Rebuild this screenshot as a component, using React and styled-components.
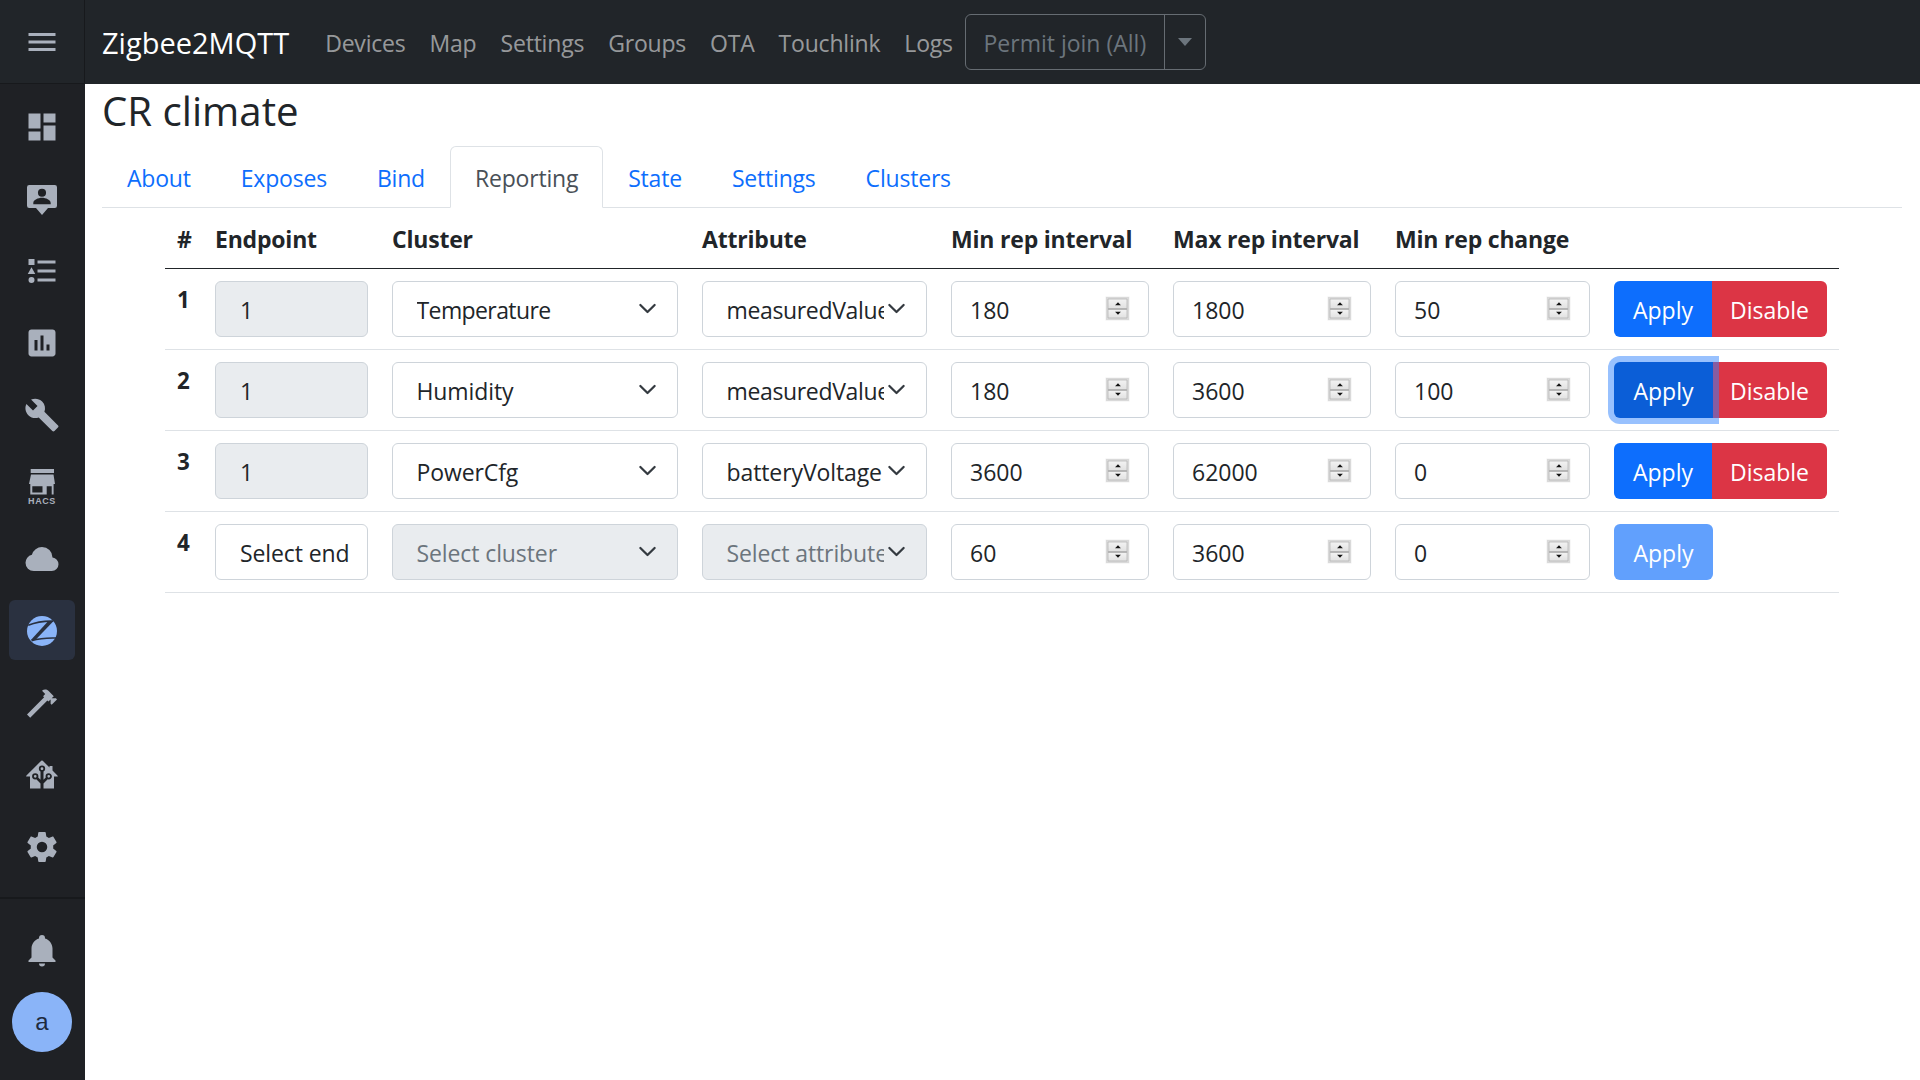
import React from 'react';
import styled, { createGlobalStyle } from 'styled-components';

const FONT = '"Open Sans", "Noto Sans", "Liberation Sans", sans-serif';
const chevron = "url(\"data:image/svg+xml,%3csvg xmlns='http://www.w3.org/2000/svg' viewBox='0 0 16 16'%3e%3cpath fill='none' stroke='%23343a40' stroke-linecap='round' stroke-linejoin='round' stroke-width='1.9' d='M2 5l6 6 6-6'/%3e%3c/svg%3e\")";

const Global = createGlobalStyle`
  html, body { margin: 0; padding: 0; height: 100%; background: #fff; }
  body { font-family: ${FONT}; font-size: 23px; color: #212529; overflow: hidden; }
  #root { height: 100%; }
  * { box-sizing: border-box; }
`;

const Shell = styled.div`display: flex; height: 1080px; width: 1920px;`;

const Sidebar = styled.aside`
  width: 85px; flex: none; background: #1f2125; display: flex; flex-direction: column;
`;
const SideTop = styled.div`
  height: 84px; flex: none; background: #212529; border-bottom: 1px solid #17191c; border-right: 1px solid #17191c;
  display: flex; align-items: center; justify-content: center;
`;
const SideList = styled.nav`
  padding: 12px 0 0 9px; display: flex; flex-direction: column; gap: 12px;
  & > * { padding-top: 2px; }
`;
const SideItem = styled.div`
  width: 66px; height: 60px; border-radius: 6px; display: flex; align-items: center; justify-content: center;
  background: ${p => (p.$active ? '#2a3140' : 'transparent')};
  color: ${p => (p.$active ? '#8ab4f8' : '#a9b0bc')};
`;
const SideFoot = styled.div`
  margin-top: auto; height: 183px; border-top: 2px solid #17191c; padding: 21px 0 0 9px;
  display: flex; flex-direction: column; gap: 12px;
`;
const Avatar = styled.div`
  width: 60px; height: 60px; margin-left: 3px; border-radius: 50%; background: #8ab4f8; color: #1f2a3d;
  display: flex; align-items: center; justify-content: center; font-family: "Liberation Sans", sans-serif; font-size: 24px;
`;

const Icon = ({ d, size = 36 }) => (
  <svg width={size} height={size} viewBox="0 0 24 24" fill="currentColor" fillRule="evenodd"><path d={d} /></svg>
);
const MenuIcon = styled.span`color: #a9b0bc; display: flex;`;
const HacsWrap = styled.div`
  display: flex; flex-direction: column; align-items: center; color: #a9b0bc; line-height: 1;
`;
const HacsLabel = styled.span`
  font-family: "Liberation Sans", sans-serif; font-size: 9px; font-weight: 700; letter-spacing: .6px; margin-top: 2px;
`;
const HacsIcon = () => (
  <svg width="26" height="26" viewBox="0 0 26 26" fill="currentColor" fillRule="evenodd">
    <path d="M1.7 0H25V4H1.7ZM2 5.5H24.5L26 15H0ZM1.3 15H24.6V25.6H22.7V17.3H17.7V25.6H1.3ZM3.3 17.3H13.5V23.5H3.3Z" />
  </svg>
);
const ZigbeeIcon = () => (
  <svg width="36" height="36" viewBox="0 0 24 24" fill="none">
    <circle cx="12" cy="12" r="10" fill="currentColor" />
    <path d="M2.8 8.2Q10 5.2 19.4 5.4" stroke="#2a3140" strokeWidth="1.1" />
    <path d="M15.6 6L19.4 5.6L7.6 18H4.6Z" fill="#2a3140" />
    <path d="M5 18.4Q12 16.4 21.6 16.7" stroke="#2a3140" strokeWidth="1.1" />
  </svg>
);

const Right = styled.div`flex: 1; min-width: 0; display: flex; flex-direction: column;`;
const Navbar = styled.header`
  height: 84px; flex: none; background: #212529; display: flex; align-items: center; padding-left: 17px;
`;
const Brand = styled.span`color: #fff; font-size: 29px; margin-right: 24px; white-space: nowrap; padding-top: 1px;`;
const NavLink = styled.a`color: rgba(255,255,255,.55); padding: 2px 12px 0; font-size: 23px; white-space: nowrap; letter-spacing: -.2px;`;
const PermitGroup = styled.div`
  display: flex; height: 56px; border: 1px solid #666c72; border-radius: 6px;
`;
const PermitMain = styled.span`
  width: 198px; display: flex; align-items: center; justify-content: center; color: #6c757d; font-size: 23px; padding-top: 2px;
`;
const PermitCaret = styled.span`
  width: 41px; border-left: 1px solid #666c72; display: flex; align-items: center; justify-content: center;
  &::after { content: ''; border-top: 8px solid #6c757d; border-left: 7px solid transparent; border-right: 7px solid transparent; }
`;

const Main = styled.main`flex: 1; padding: 0 18px 0 17px;`;
const Title = styled.h3`
  margin: 0; height: 62px; font-size: 40.2px; font-weight: 400; line-height: 54px; color: #212529;
`;
const Tabs = styled.div`display: flex; height: 62px; border-bottom: 1px solid #dee2e6;`;
const Tab = styled.a`
  height: 62px; padding: 2px 24px 0; display: flex; align-items: center; white-space: nowrap; letter-spacing: -.2px;
  border: 1px solid ${p => (p.$active ? '#dee2e6' : 'transparent')};
  border-bottom-color: ${p => (p.$active ? '#fff' : 'transparent')};
  border-radius: 6px 6px 0 0;
  color: ${p => (p.$active ? '#495057' : '#0d6efd')};
  background: ${p => (p.$active ? '#fff' : 'transparent')};
`;
const Table = styled.table`
  width: 1674px; margin: 0 auto; table-layout: fixed; border-collapse: collapse;
`;
const Col = styled.col`width: ${p => p.$w}px;`;
const Th = styled.th`
  height: 60px; padding: 3px 12px 0; text-align: left; font-weight: 700; font-size: 23px; white-space: nowrap;
  border-bottom: 1px solid #212529; letter-spacing: -.2px;
`;
const Row = styled.tr`border-bottom: 1px solid #dee2e6;`;
const Td = styled.td`padding: 12px; vertical-align: top; height: 81px;`;
const IdCell = styled(Td)`font-weight: 700; font-size: 22.4px; line-height: 38px;`;

const Select = styled.select`
  display: block; width: 100%; height: 56px; margin: 0; font: inherit; font-size: 23px;
  letter-spacing: ${p => p.$spacing ?? -0.1}px;
  appearance: none; border: 1px solid #ced4da; border-radius: 6px; opacity: 1;
  padding: 2px ${p => (p.$plain ? 18 : 42)}px 0 ${p => (p.$plain ? 24 : 23.5)}px;
  color: ${p => (p.$muted ? '#6c757d' : '#212529')};
  background-color: ${p => (p.$grey ? '#e9ecef' : '#fff')};
  background-image: ${p => (p.$plain ? 'none' : chevron)};
  background-repeat: no-repeat; background-position: right 20px center; background-size: 19px 19px;
`;
const NumberBox = styled.div`
  height: 56px; border: 1px solid #ced4da; border-radius: 6px; display: flex; align-items: center; padding: 0 19px 0 18px; background: #fff;
`;
const NumberInput = styled.input`
  flex: 1; min-width: 0; border: 0; outline: 0; padding: 2px 0 0; font: inherit; font-size: 23px; color: #212529; background: transparent;
  appearance: textfield;
  &::-webkit-inner-spin-button, &::-webkit-outer-spin-button { -webkit-appearance: none; margin: 0; }
`;
const Spinner = styled.div`
  flex: none; width: 23px; height: 23px; border: 2px solid #b3b3b3; outline: 1px solid #efefef; outline-offset: -1px;
  display: flex; flex-direction: column; gap: 2px; background: #b3b3b3; box-shadow: 0 0 0 1px #efefef;
  transform: scale(.96);
`;
const SpinStep = styled.span`
  flex: 1; background: linear-gradient(#f2f2f2, #e2e2e2); display: flex; align-items: center; justify-content: center;
  &::after {
    content: ''; border-left: 3.5px solid transparent; border-right: 3.5px solid transparent;
    ${p => (p.$down ? 'border-top: 3.5px solid #111;' : 'border-bottom: 3.5px solid #111;')}
  }
`;
const Actions = styled.div`display: flex;`;
const Button = styled.button`
  height: 56px; margin: 0; border: 0; font: inherit; font-size: 23px; color: #fff; position: relative;
  padding: 2px 0 0; white-space: nowrap;
`;
const ApplyBtn = styled(Button)`
  width: ${p => (p.$alone ? 99 : p.$focused ? 99 : 98)}px;
  border-radius: ${p => (p.$alone ? '6px' : '6px 0 0 6px')};
  background: ${p => (p.$focused ? '#0b5ed7' : '#0d6efd')};
  opacity: ${p => (p.$alone ? .65 : 1)};
  z-index: ${p => (p.$focused ? 1 : 0)};
  box-shadow: ${p => (p.$focused ? '0 0 0 6px rgba(49,132,253,.5)' : 'none')};
`;
const DisableBtn = styled(Button)`
  flex: none; width: 115px; border-radius: 0 6px 6px 0; background: #dc3545;
  margin-left: ${p => (p.$after ? -1 : 0)}px;
`;

const P = {
  dash: 'M13,3V9H21V3M13,21H21V11H13M3,21H11V15H3M3,13H11V3H3V13Z',
  person: 'M3.5 2.7H20.5A1.5 1.5 0 0 1 22 4.2V16.5A1.5 1.5 0 0 1 20.5 18H16L12 22.7L8 18H3.5A1.5 1.5 0 0 1 2 16.5V4.2A1.5 1.5 0 0 1 3.5 2.7ZM12 5.1A2.7 2.7 0 1 0 12 10.5A2.7 2.7 0 1 0 12 5.1ZM6.2 15.5H17.8V14.6C17.8 12.5 14.5 11.1 12 11.1C9.5 11.1 6.2 12.5 6.2 14.6Z',
  list: 'M5,9.5L7.5,14H2.5L5,9.5M3,4H7V8H3V4M5,20A2,2 0 0,0 7,18A2,2 0 0,0 5,16A2,2 0 0,0 3,18A2,2 0 0,0 5,20M9,5V7H21V5H9M9,19H21V17H9V19M9,13H21V11H9V13Z',
  chart: 'M19 3H5C3.89 3 3 3.89 3 5V19C3 20.1 3.89 21 5 21H19C20.1 21 21 20.1 21 19V5C21 3.89 20.1 3 19 3M9 17H7V10H9V17M13 17H11V7H13V17M17 17H15V13H17V17Z',
  wrench: 'M22.7,19L13.6,9.9C14.5,7.6 14,4.9 12.1,3C10.1,1 7.1,0.6 4.7,1.7L9,6L6,9L1.6,4.7C0.4,7.1 0.9,10.1 2.9,12.1C4.8,14 7.5,14.5 9.8,13.6L18.9,22.7C19.3,23.1 19.9,23.1 20.3,22.7L22.6,20.4C23.1,20 23.1,19.3 22.7,19Z',
  cloud: 'M6.5 20Q4.22 20 2.61 18.43 1 16.85 1 14.58 1 12.63 2.17 11.1 3.35 9.57 5.25 9.15 5.88 6.85 7.75 5.43 9.63 4 12 4 14.93 4 16.96 6.04 19 8.07 19 11 20.73 11.2 21.86 12.5 23 13.78 23 15.5 23 17.38 21.69 18.69 20.38 20 18.5 20Z',
  hammer: 'M2 19.63L13.43 8.2L12.72 7.5L14.14 6.07L12 3.89C13.2 2.7 15.09 2.7 16.27 3.89L19.87 7.5L18.45 8.91H21.29L22 9.62L18.45 13.21L17.74 12.5V9.62L16.27 11.04L15.56 10.33L4.13 21.76L2 19.63Z',
  home: 'M21.8,13H20V21H13V17.67L15.79,14.88L16.5,15C17.66,15 18.6,14.06 18.6,12.9C18.6,11.74 17.66,10.8 16.5,10.8A2.1,2.1 0 0,0 14.4,12.9L14.5,13.61L13,15.13V9.65C13.66,9.29 14.1,8.6 14.1,7.8A2.1,2.1 0 0,0 12,5.7A2.1,2.1 0 0,0 9.9,7.8C9.9,8.6 10.34,9.29 11,9.65V15.13L9.5,13.61L9.6,12.9A2.1,2.1 0 0,0 7.5,10.8A2.1,2.1 0 0,0 5.4,12.9A2.1,2.1 0 0,0 7.5,15L8.21,14.88L11,17.67V21H4V13H2.25C1.83,13 1.42,13 1.42,12.79C1.43,12.57 1.85,12.15 2.28,11.72L11,3C11.33,2.67 11.67,2.33 12,2.33C12.33,2.33 12.67,2.67 13,3L17,7V6H19V9L21.78,11.78C22.15,12.15 22.55,12.55 22.57,12.76C22.6,12.98 22.2,13 21.8,13M7.5,12A0.9,0.9 0 0,1 8.4,12.9A0.9,0.9 0 0,1 7.5,13.8A0.9,0.9 0 0,1 6.6,12.9A0.9,0.9 0 0,1 7.5,12M16.5,12C17,12 17.4,12.4 17.4,12.9C17.4,13.4 17,13.8 16.5,13.8A0.9,0.9 0 0,1 15.6,12.9A0.9,0.9 0 0,1 16.5,12M12,6.9C12.5,6.9 12.9,7.3 12.9,7.8C12.9,8.3 12.5,8.7 12,8.7C11.5,8.7 11.1,8.3 11.1,7.8C11.1,7.3 11.5,6.9 12,6.9Z',
  cog: 'M12,15.5A3.5,3.5 0 0,1 8.5,12A3.5,3.5 0 0,1 12,8.5A3.5,3.5 0 0,1 15.5,12A3.5,3.5 0 0,1 12,15.5M19.43,12.97C19.47,12.65 19.5,12.33 19.5,12C19.5,11.67 19.47,11.34 19.43,11L21.54,9.37C21.73,9.22 21.78,8.95 21.66,8.73L19.66,5.27C19.54,5.05 19.27,4.96 19.05,5.05L16.56,6.05C16.04,5.66 15.5,5.32 14.87,5.07L14.5,2.42C14.46,2.18 14.25,2 14,2H10C9.75,2 9.54,2.18 9.5,2.42L9.13,5.07C8.5,5.32 7.96,5.66 7.44,6.05L4.95,5.05C4.73,4.96 4.46,5.05 4.34,5.27L2.34,8.73C2.21,8.95 2.27,9.22 2.46,9.37L4.57,11C4.53,11.34 4.5,11.67 4.5,12C4.5,12.33 4.53,12.65 4.57,12.97L2.46,14.63C2.27,14.78 2.21,15.05 2.34,15.27L4.34,18.73C4.46,18.95 4.73,19.03 4.95,18.95L7.44,17.94C7.96,18.34 8.5,18.68 9.13,18.93L9.5,21.58C9.54,21.82 9.75,22 10,22H14C14.25,22 14.46,21.82 14.5,21.58L14.87,18.93C15.5,18.67 16.04,18.34 16.56,17.94L19.05,18.95C19.27,19.03 19.54,18.95 19.66,18.73L21.66,15.27C21.78,15.05 21.73,14.78 21.54,14.63L19.43,12.97Z',
  bell: 'M21,19V20H3V19L5,17V11C5,7.9 7.03,5.17 10,4.29C10,4.19 10,4.1 10,4A2,2 0 0,1 12,2A2,2 0 0,1 14,4C14,4.1 14,4.19 14,4.29C16.97,5.17 19,7.9 19,11V17L21,19M14,21A2,2 0 0,1 12,23A2,2 0 0,1 10,21',
  menu: 'M3,6H21V8H3V6M3,11H21V13H3V11M3,16H21V18H3V16Z',
};

const columns = [38, 177, 310, 249, 222, 222, 219, 237];
const headers = ['#', 'Endpoint', 'Cluster', 'Attribute', 'Min rep interval', 'Max rep interval', 'Min rep change', ''];
const rows = [
  { id: 1, ep: '1', cluster: 'Temperature', clusterSpacing: -0.6, attr: 'measuredValue', attrSpacing: -0.35, min: 180, max: 1800, change: 50 },
  { id: 2, ep: '1', cluster: 'Humidity', attr: 'measuredValue', attrSpacing: -0.35, min: 180, max: 3600, change: 100, focused: true },
  { id: 3, ep: '1', cluster: 'PowerCfg', attr: 'batteryVoltage', min: 3600, max: 62000, change: 0 },
  { id: 4, ep: 'Select end', cluster: 'Select cluster', attr: 'Select attribute', min: 60, max: 3600, change: 0, isNew: true },
];

const Num = ({ value }) => (
  <NumberBox>
    <NumberInput type="number" defaultValue={value} />
    <Spinner><SpinStep /><SpinStep $down /></Spinner>
  </NumberBox>
);

const Choice = ({ value, ...rest }) => (
  <Select defaultValue={value} {...rest}><option>{value}</option></Select>
);

export default function App() {
  return (
    <Shell>
      <Global />
      <Sidebar>
        <SideTop><MenuIcon><Icon d={P.menu} /></MenuIcon></SideTop>
        <SideList>
          <SideItem><Icon d={P.dash} /></SideItem>
          <SideItem><Icon d={P.person} /></SideItem>
          <SideItem><Icon d={P.list} /></SideItem>
          <SideItem><Icon d={P.chart} /></SideItem>
          <SideItem><Icon d={P.wrench} /></SideItem>
          <SideItem>
            <HacsWrap>
              <HacsIcon />
              <HacsLabel>HACS</HacsLabel>
            </HacsWrap>
          </SideItem>
          <SideItem><Icon d={P.cloud} /></SideItem>
          <SideItem $active><ZigbeeIcon /></SideItem>
          <SideItem><Icon d={P.hammer} /></SideItem>
          <SideItem><Icon d={P.home} /></SideItem>
          <SideItem><Icon d={P.cog} /></SideItem>
        </SideList>
        <SideFoot>
          <SideItem><Icon d={P.bell} /></SideItem>
          <Avatar>a</Avatar>
        </SideFoot>
      </Sidebar>
      <Right>
        <Navbar>
          <Brand>Zigbee2MQTT</Brand>
          {['Devices', 'Map', 'Settings', 'Groups', 'OTA', 'Touchlink', 'Logs'].map(n => <NavLink key={n}>{n}</NavLink>)}
          <PermitGroup>
            <PermitMain>Permit join (All)</PermitMain>
            <PermitCaret />
          </PermitGroup>
        </Navbar>
        <Main>
          <Title>CR climate</Title>
          <Tabs>
            {['About', 'Exposes', 'Bind', 'Reporting', 'State', 'Settings', 'Clusters'].map(t => (
              <Tab key={t} $active={t === 'Reporting'}>{t}</Tab>
            ))}
          </Tabs>
          <Table>
            <colgroup>{columns.map((w, i) => <Col key={i} $w={w} />)}</colgroup>
            <thead>
              <tr>{headers.map((h, i) => <Th key={i}>{h}</Th>)}</tr>
            </thead>
            <tbody>
              {rows.map(r => (
                <Row key={r.id}>
                  <IdCell>{r.id}</IdCell>
                  <Td><Choice value={r.ep} $plain $grey={!r.isNew} disabled={!r.isNew} /></Td>
                  <Td><Choice value={r.cluster} $spacing={r.clusterSpacing} $grey={r.isNew} $muted={r.isNew} disabled={r.isNew} /></Td>
                  <Td><Choice value={r.attr} $spacing={r.attrSpacing} $grey={r.isNew} $muted={r.isNew} disabled={r.isNew} /></Td>
                  <Td><Num value={r.min} /></Td>
                  <Td><Num value={r.max} /></Td>
                  <Td><Num value={r.change} /></Td>
                  <Td>
                    <Actions>
                      <ApplyBtn $focused={r.focused} $alone={r.isNew} disabled={r.isNew}>Apply</ApplyBtn>
                      {!r.isNew && <DisableBtn $after={r.focused}>Disable</DisableBtn>}
                    </Actions>
                  </Td>
                </Row>
              ))}
            </tbody>
          </Table>
        </Main>
      </Right>
    </Shell>
  );
}
